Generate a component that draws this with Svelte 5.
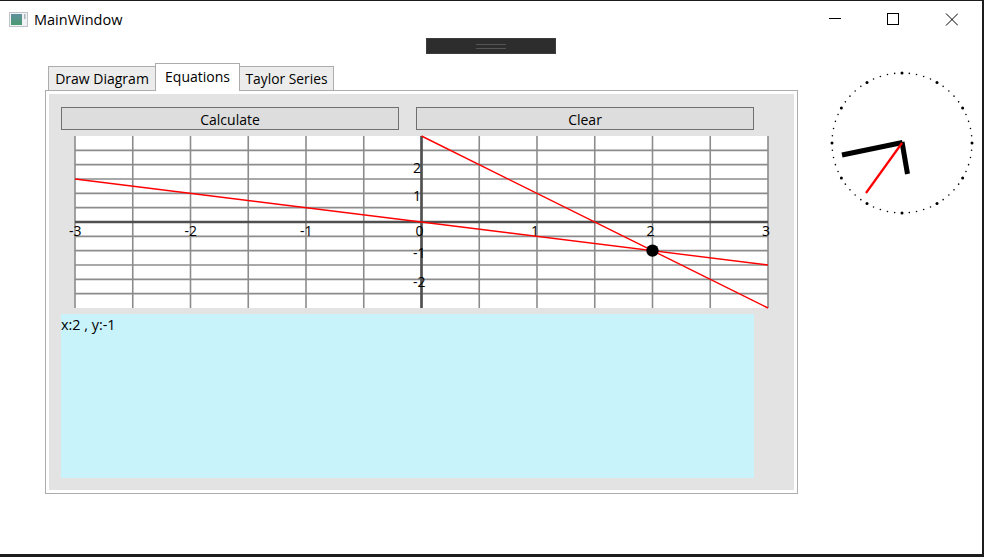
<script lang="ts">
	// chart scale: 115.5px per x unit, 86/3px per y unit, origin at 346.5,86
	const W = 693;
	const H = 172;
	const ux = W / 6;
	const uy = H / 6;
	const px = (x: number) => W / 2 + x * ux;
	const py = (y: number) => H / 2 - y * uy;

	const vLines = Array.from({ length: 13 }, (_, i) => i * (W / 12));
	const hLines = Array.from({ length: 11 }, (_, i) => (i + 1) * (H / 12));
	const xLabels = [-3, -2, -1, 0, 1, 2, 3];
	const yLabels = [
		{ text: '2', y: 37 },
		{ text: '1', y: 65 },
		{ text: '-1', y: 122 },
		{ text: '-2', y: 151 }
	];

	const ticks = Array.from({ length: 60 }, (_, i) => {
		const a = (i * Math.PI) / 30;
		return {
			x: 72 + 70 * Math.sin(a),
			y: 73 - 70 * Math.cos(a),
			major: i % 5 === 0
		};
	});
</script>

<div class="window">
	<header class="titlebar">
		<svg class="app-icon" viewBox="0 0 19 15" width="19" height="15">
			<defs>
				<linearGradient id="appfill" x1="0" y1="0" x2="0" y2="1">
					<stop offset="0" stop-color="#5f8f9c" />
					<stop offset="1" stop-color="#4a9a70" />
				</linearGradient>
			</defs>
			<rect x="0.5" y="0.5" width="18" height="14" fill="#f0f2f5" stroke="#c0c4c8" />
			<rect x="2" y="2" width="11" height="11" fill="url(#appfill)" />
			<rect x="15" y="2" width="1.5" height="5" fill="#a9b3bb" />
		</svg>
		<span class="title">MainWindow</span>
		<div class="controls">
			<svg viewBox="0 0 13 13" width="13" height="13">
				<line x1="0" y1="5.5" x2="12" y2="5.5" stroke="#000" />
			</svg>
			<svg viewBox="0 0 13 13" width="13" height="13">
				<rect x="0.5" y="0.5" width="11" height="11" fill="none" stroke="#000" />
			</svg>
			<svg viewBox="0 0 13 13" width="13" height="13">
				<path d="M1 0.5 L13 12.5 M13 0.5 L1 12.5" stroke="#000" fill="none" />
			</svg>
		</div>
	</header>

	<div class="grip-row">
		<div class="grip"><span></span></div>
	</div>

	<div class="content">
		<div class="tabs">
			<div class="tabstrip">
				<div class="tab">Draw Diagram</div>
				<div class="tab active">Equations</div>
				<div class="tab last">Taylor Series</div>
			</div>
			<div class="panel">
				<div class="panel-inner">
					<div class="buttons">
						<button>Calculate</button>
						<button>Clear</button>
					</div>
					<svg class="chart" viewBox="0 0 {W} {H}" width={W} height={H}>
						<rect width={W} height={H} fill="#fff" />
						{#each vLines as x}
							<line x1={x} y1="0" x2={x} y2={H} class="grid" />
						{/each}
						{#each hLines as y}
							<line x1="0" y1={y} x2={W} y2={y} class="grid" />
						{/each}
						<line x1="0" y1={H / 2} x2={W} y2={H / 2} class="axis" />
						<line x1={W / 2} y1="0" x2={W / 2} y2={H} class="axis" />
						{#each xLabels as n}
							<text x={px(n) - 6} y="100">{n}</text>
						{/each}
						{#each yLabels as l}
							<text x="338" y={l.y}>{l.text}</text>
						{/each}
						<line x1={px(0)} y1={py(3)} x2={px(3)} y2={py(-3)} class="plot" />
						<line x1={px(-3)} y1={py(1.5)} x2={px(3)} y2={py(-1.5)} class="plot" />
						<circle cx={px(2)} cy={py(-1)} r="6.2" fill="#000" />
					</svg>
					<div class="output">x:2 , y:-1</div>
				</div>
			</div>
		</div>

		<svg class="clock" viewBox="0 0 144 146" width="144" height="146">
			{#each ticks as t}
				<circle cx={t.x} cy={t.y} r={t.major ? 1.5 : 0.8} fill="#000" />
			{/each}
			<line x1="72" y1="72" x2="77.5" y2="104" class="hand" />
			<line x1="72.5" y1="72.5" x2="12" y2="85" class="hand" />
			<line x1="72" y1="73" x2="36" y2="123" class="second" />
		</svg>
	</div>
</div>

<style>
	:global(body) {
		background: #1c1c1c;
	}

	.window {
		box-sizing: border-box;
		width: 982px;
		height: 553px;
		margin-top: 1px;
		background: #fff;
		font-family: "Open Sans", "Noto Sans", sans-serif;
		font-size: 14px;
		color: #000;
		overflow: hidden;
	}

	.titlebar {
		display: flex;
		align-items: center;
		height: 37px;
		padding-left: 9px;
	}

	.app-icon {
		flex: none;
		margin-right: 6px;
	}

	.title {
		font-size: 14.5px;
	}

	.controls {
		display: flex;
		gap: 45px;
		margin-left: auto;
		margin-right: 24px;
	}

	.grip-row {
		display: flex;
		height: 16px;
		padding-left: 426px;
	}

	.grip {
		box-sizing: border-box;
		display: flex;
		align-items: center;
		justify-content: center;
		width: 130px;
		height: 16px;
		background: #2d2d2d;
		border: 1px solid #3c3c3c;
	}

	.grip span {
		width: 30px;
		height: 3px;
		border-top: 1px solid #555;
		border-bottom: 1px solid #555;
	}

	.content {
		display: flex;
		align-items: flex-start;
		padding: 9px 0 0 45px;
	}

	.tabs {
		flex: none;
		width: 753px;
	}

	.tabstrip {
		display: flex;
		align-items: flex-end;
		height: 27px;
		padding-left: 3px;
		position: relative;
		z-index: 1;
	}

	.tab {
		box-sizing: border-box;
		display: flex;
		align-items: center;
		justify-content: center;
		height: 24px;
		width: 108px;
		background: #ececec;
		border: 1px solid #acacac;
		border-bottom: none;
	}

	.tab.active {
		width: 85px;
		height: 28px;
		margin: 0 0 -1px -1px;
		padding-bottom: 3px;
		background: #fff;
	}

	.tab.last {
		width: 94px;
		margin-left: 0;
		border-left: none;
		font-size: 13.8px;
	}

	.panel {
		box-sizing: border-box;
		height: 404px;
		padding: 3px;
		background: #fff;
		border: 1px solid #acacac;
	}

	.panel-inner {
		box-sizing: border-box;
		height: 396px;
		padding: 13px 12px;
		background: #e3e3e3;
	}

	.buttons {
		display: grid;
		grid-template-columns: 338px 338px;
		column-gap: 17px;
	}

	button {
		box-sizing: border-box;
		height: 23px;
		padding: 1px 0 0;
		background: #dddddd;
		border: 1px solid #707070;
		border-radius: 0;
		font: inherit;
		color: inherit;
	}

	.chart {
		display: block;
		margin: 6px 0 0 14px;
		overflow: visible;
	}

	.grid {
		stroke: #8c8c8c;
		stroke-width: 1.6;
	}

	.axis {
		stroke: #505050;
		stroke-width: 2.6;
	}

	.plot {
		stroke: #ff0000;
		stroke-width: 1.4;
	}

	.chart text {
		font-size: 14px;
		fill: #000;
	}

	.output {
		box-sizing: border-box;
		width: 693px;
		height: 164px;
		margin-top: 6px;
		padding-top: 1px;
		background: #c9f3fa;
		font-size: 14.4px;
	}

	.clock {
		display: block;
		flex: none;
		margin: 7px 0 0 32px;
	}

	.hand {
		stroke: #000;
		stroke-width: 5;
	}

	.second {
		stroke: #ff0000;
		stroke-width: 2.2;
	}
</style>
